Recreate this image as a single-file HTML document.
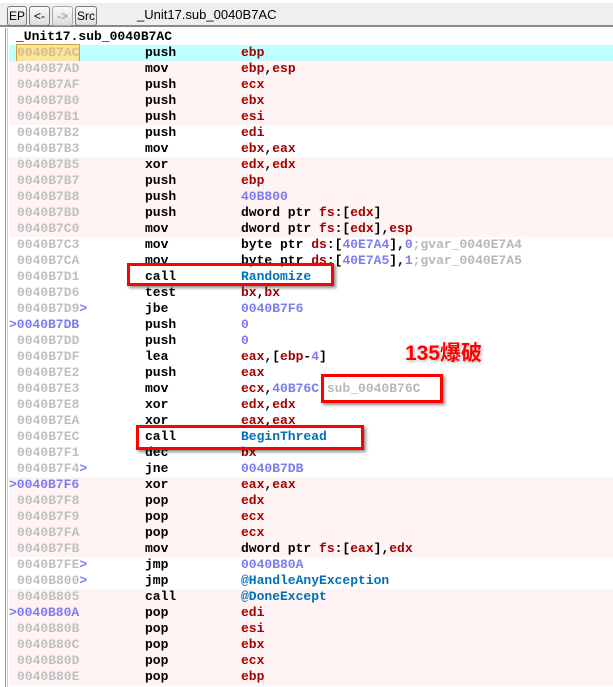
<!DOCTYPE html>
<html><head><meta charset="utf-8"><style>
*{margin:0;padding:0;box-sizing:border-box}
body{width:613px;height:687px;overflow:hidden;background:#fff;position:relative;font-family:"Liberation Mono",monospace;font-weight:bold;font-size:13px}
#tb{position:absolute;left:0;top:3px;width:613px;height:24px;background:#efefef;border-bottom:2px solid #8a8a8a}
.btn{position:absolute;top:3px;height:20px;border:1px solid #777;border-radius:3px;background:linear-gradient(#fafafa,#dcdcdc);font-family:"Liberation Sans",sans-serif;font-weight:normal;font-size:12px;text-align:center;line-height:18px;color:#000}
#title{position:absolute;left:137px;top:4px;font-family:"Liberation Sans",sans-serif;font-weight:normal;font-size:13px}
#lb{position:absolute;left:5px;top:28px;width:3px;height:659px;border-left:1px solid #999;border-right:1px solid #ccc}
#hd{position:absolute;left:16px;top:29px;font-size:13px;color:#000;line-height:16px}
.r{position:absolute;left:9px;width:604px;height:16px;line-height:16px;white-space:pre}
.p{background:#fff4f3}.c{background:#bfffff}
.a{position:absolute;left:8px;color:#c0c0c0}
.m{position:absolute;left:136px;color:#000}
.o{position:absolute;left:232px;color:#000}
.g{color:#a00000}.n{color:#7c7cf0}.f{color:#0070b8}.k{color:#b8b8b8}.j{color:#7c7cf0}
.box{position:absolute;border:3px solid #f00;box-shadow:2px 2px 3px rgba(0,0,0,.45)}
#lab{position:absolute;left:405px;top:337px;color:#f00;font-family:"Liberation Sans","Noto Sans CJK SC",sans-serif;font-weight:bold;font-size:21px;text-shadow:0 0 2px #fff,1px 1px 3px #999,0 0 3px #fff}
</style></head><body>
<div id="tb">
<div class="btn" style="left:7px;width:20px">EP</div>
<div class="btn" style="left:29px;width:21px">&lt;-</div>
<div class="btn" style="left:52px;width:21px;color:#888;border-color:#aaa">-&gt;</div>
<div class="btn" style="left:75px;width:22px">Src</div>
<div id="title">_Unit17.sub_0040B7AC</div>
</div>
<div id="lb"></div>
<div id="hd">_Unit17.sub_0040B7AC</div>

<div class="r c" style="top:45px"><span class="a" style="background:#fbe3a0;outline:1px solid #d0a040;color:#d8c080">0040B7AC</span><span class="m">push</span><span class="o g">ebp</span></div>
<div class="r p" style="top:61px"><span class="a">0040B7AD</span><span class="m">mov</span><span class="o"><span class="g">ebp</span>,<span class="g">esp</span></span></div>
<div class="r p" style="top:77px"><span class="a">0040B7AF</span><span class="m">push</span><span class="o g">ecx</span></div>
<div class="r p" style="top:93px"><span class="a">0040B7B0</span><span class="m">push</span><span class="o g">ebx</span></div>
<div class="r p" style="top:109px"><span class="a">0040B7B1</span><span class="m">push</span><span class="o g">esi</span></div>
<div class="r" style="top:125px"><span class="a">0040B7B2</span><span class="m">push</span><span class="o g">edi</span></div>
<div class="r" style="top:141px"><span class="a">0040B7B3</span><span class="m">mov</span><span class="o"><span class="g">ebx</span>,<span class="g">eax</span></span></div>
<div class="r p" style="top:157px"><span class="a">0040B7B5</span><span class="m">xor</span><span class="o"><span class="g">edx</span>,<span class="g">edx</span></span></div>
<div class="r p" style="top:173px"><span class="a">0040B7B7</span><span class="m">push</span><span class="o g">ebp</span></div>
<div class="r p" style="top:189px"><span class="a">0040B7B8</span><span class="m">push</span><span class="o n">40B800</span></div>
<div class="r p" style="top:205px"><span class="a">0040B7BD</span><span class="m">push</span><span class="o">dword ptr <span class="g">fs</span>:[<span class="g">edx</span>]</span></div>
<div class="r p" style="top:221px"><span class="a">0040B7C0</span><span class="m">mov</span><span class="o">dword ptr <span class="g">fs</span>:[<span class="g">edx</span>],<span class="g">esp</span></span></div>
<div class="r" style="top:237px"><span class="a">0040B7C3</span><span class="m">mov</span><span class="o">byte ptr <span class="g">ds</span>:[<span class="n">40E7A4</span>],<span class="n">0</span><span class="k">;gvar_0040E7A4</span></span></div>
<div class="r" style="top:253px"><span class="a">0040B7CA</span><span class="m">mov</span><span class="o">byte ptr <span class="g">ds</span>:[<span class="n">40E7A5</span>],<span class="n">1</span><span class="k">;gvar_0040E7A5</span></span></div>
<div class="r" style="top:269px"><span class="a">0040B7D1</span><span class="m">call</span><span class="o f">Randomize</span></div>
<div class="r" style="top:285px"><span class="a">0040B7D6</span><span class="m">test</span><span class="o"><span class="g">bx</span>,<span class="g">bx</span></span></div>
<div class="r" style="top:301px"><span class="a">0040B7D9<span class="j">&gt;</span></span><span class="m">jbe</span><span class="o n">0040B7F6</span></div>
<div class="r" style="top:317px"><span class="a" style="left:0;color:#7c7cf0">&gt;0040B7DB</span><span class="m">push</span><span class="o n">0</span></div>
<div class="r" style="top:333px"><span class="a">0040B7DD</span><span class="m">push</span><span class="o n">0</span></div>
<div class="r" style="top:349px"><span class="a">0040B7DF</span><span class="m">lea</span><span class="o"><span class="g">eax</span>,[<span class="g">ebp</span>-<span class="n">4</span>]</span></div>
<div class="r" style="top:365px"><span class="a">0040B7E2</span><span class="m">push</span><span class="o g">eax</span></div>
<div class="r" style="top:381px"><span class="a">0040B7E3</span><span class="m">mov</span><span class="o"><span class="g">ecx</span>,<span class="n">40B76C</span><span class="k">;sub_0040B76C</span></span></div>
<div class="r" style="top:397px"><span class="a">0040B7E8</span><span class="m">xor</span><span class="o"><span class="g">edx</span>,<span class="g">edx</span></span></div>
<div class="r" style="top:413px"><span class="a">0040B7EA</span><span class="m">xor</span><span class="o"><span class="g">eax</span>,<span class="g">eax</span></span></div>
<div class="r" style="top:429px"><span class="a">0040B7EC</span><span class="m">call</span><span class="o f">BeginThread</span></div>
<div class="r" style="top:445px"><span class="a">0040B7F1</span><span class="m">dec</span><span class="o g">bx</span></div>
<div class="r" style="top:461px"><span class="a">0040B7F4<span class="j">&gt;</span></span><span class="m">jne</span><span class="o n">0040B7DB</span></div>
<div class="r p" style="top:477px"><span class="a" style="left:0;color:#7c7cf0">&gt;0040B7F6</span><span class="m">xor</span><span class="o"><span class="g">eax</span>,<span class="g">eax</span></span></div>
<div class="r p" style="top:493px"><span class="a">0040B7F8</span><span class="m">pop</span><span class="o g">edx</span></div>
<div class="r p" style="top:509px"><span class="a">0040B7F9</span><span class="m">pop</span><span class="o g">ecx</span></div>
<div class="r p" style="top:525px"><span class="a">0040B7FA</span><span class="m">pop</span><span class="o g">ecx</span></div>
<div class="r p" style="top:541px"><span class="a">0040B7FB</span><span class="m">mov</span><span class="o">dword ptr <span class="g">fs</span>:[<span class="g">eax</span>],<span class="g">edx</span></span></div>
<div class="r" style="top:557px"><span class="a">0040B7FE<span class="j">&gt;</span></span><span class="m">jmp</span><span class="o n">0040B80A</span></div>
<div class="r" style="top:573px"><span class="a">0040B800<span class="j">&gt;</span></span><span class="m">jmp</span><span class="o f">@HandleAnyException</span></div>
<div class="r p" style="top:589px"><span class="a">0040B805</span><span class="m">call</span><span class="o f">@DoneExcept</span></div>
<div class="r p" style="top:605px"><span class="a" style="left:0;color:#7c7cf0">&gt;0040B80A</span><span class="m">pop</span><span class="o g">edi</span></div>
<div class="r p" style="top:621px"><span class="a">0040B80B</span><span class="m">pop</span><span class="o g">esi</span></div>
<div class="r p" style="top:637px"><span class="a">0040B80C</span><span class="m">pop</span><span class="o g">ebx</span></div>
<div class="r p" style="top:653px"><span class="a">0040B80D</span><span class="m">pop</span><span class="o g">ecx</span></div>
<div class="r p" style="top:669px"><span class="a">0040B80E</span><span class="m">pop</span><span class="o g">ebp</span></div>

<div class="box" style="left:127px;top:263px;width:207px;height:23px"></div>
<div class="box" style="left:321px;top:374px;width:122px;height:29px"></div>
<div class="box" style="left:136px;top:425px;width:228px;height:25px"></div>
<div id="lab">135爆破</div>
</body></html>
